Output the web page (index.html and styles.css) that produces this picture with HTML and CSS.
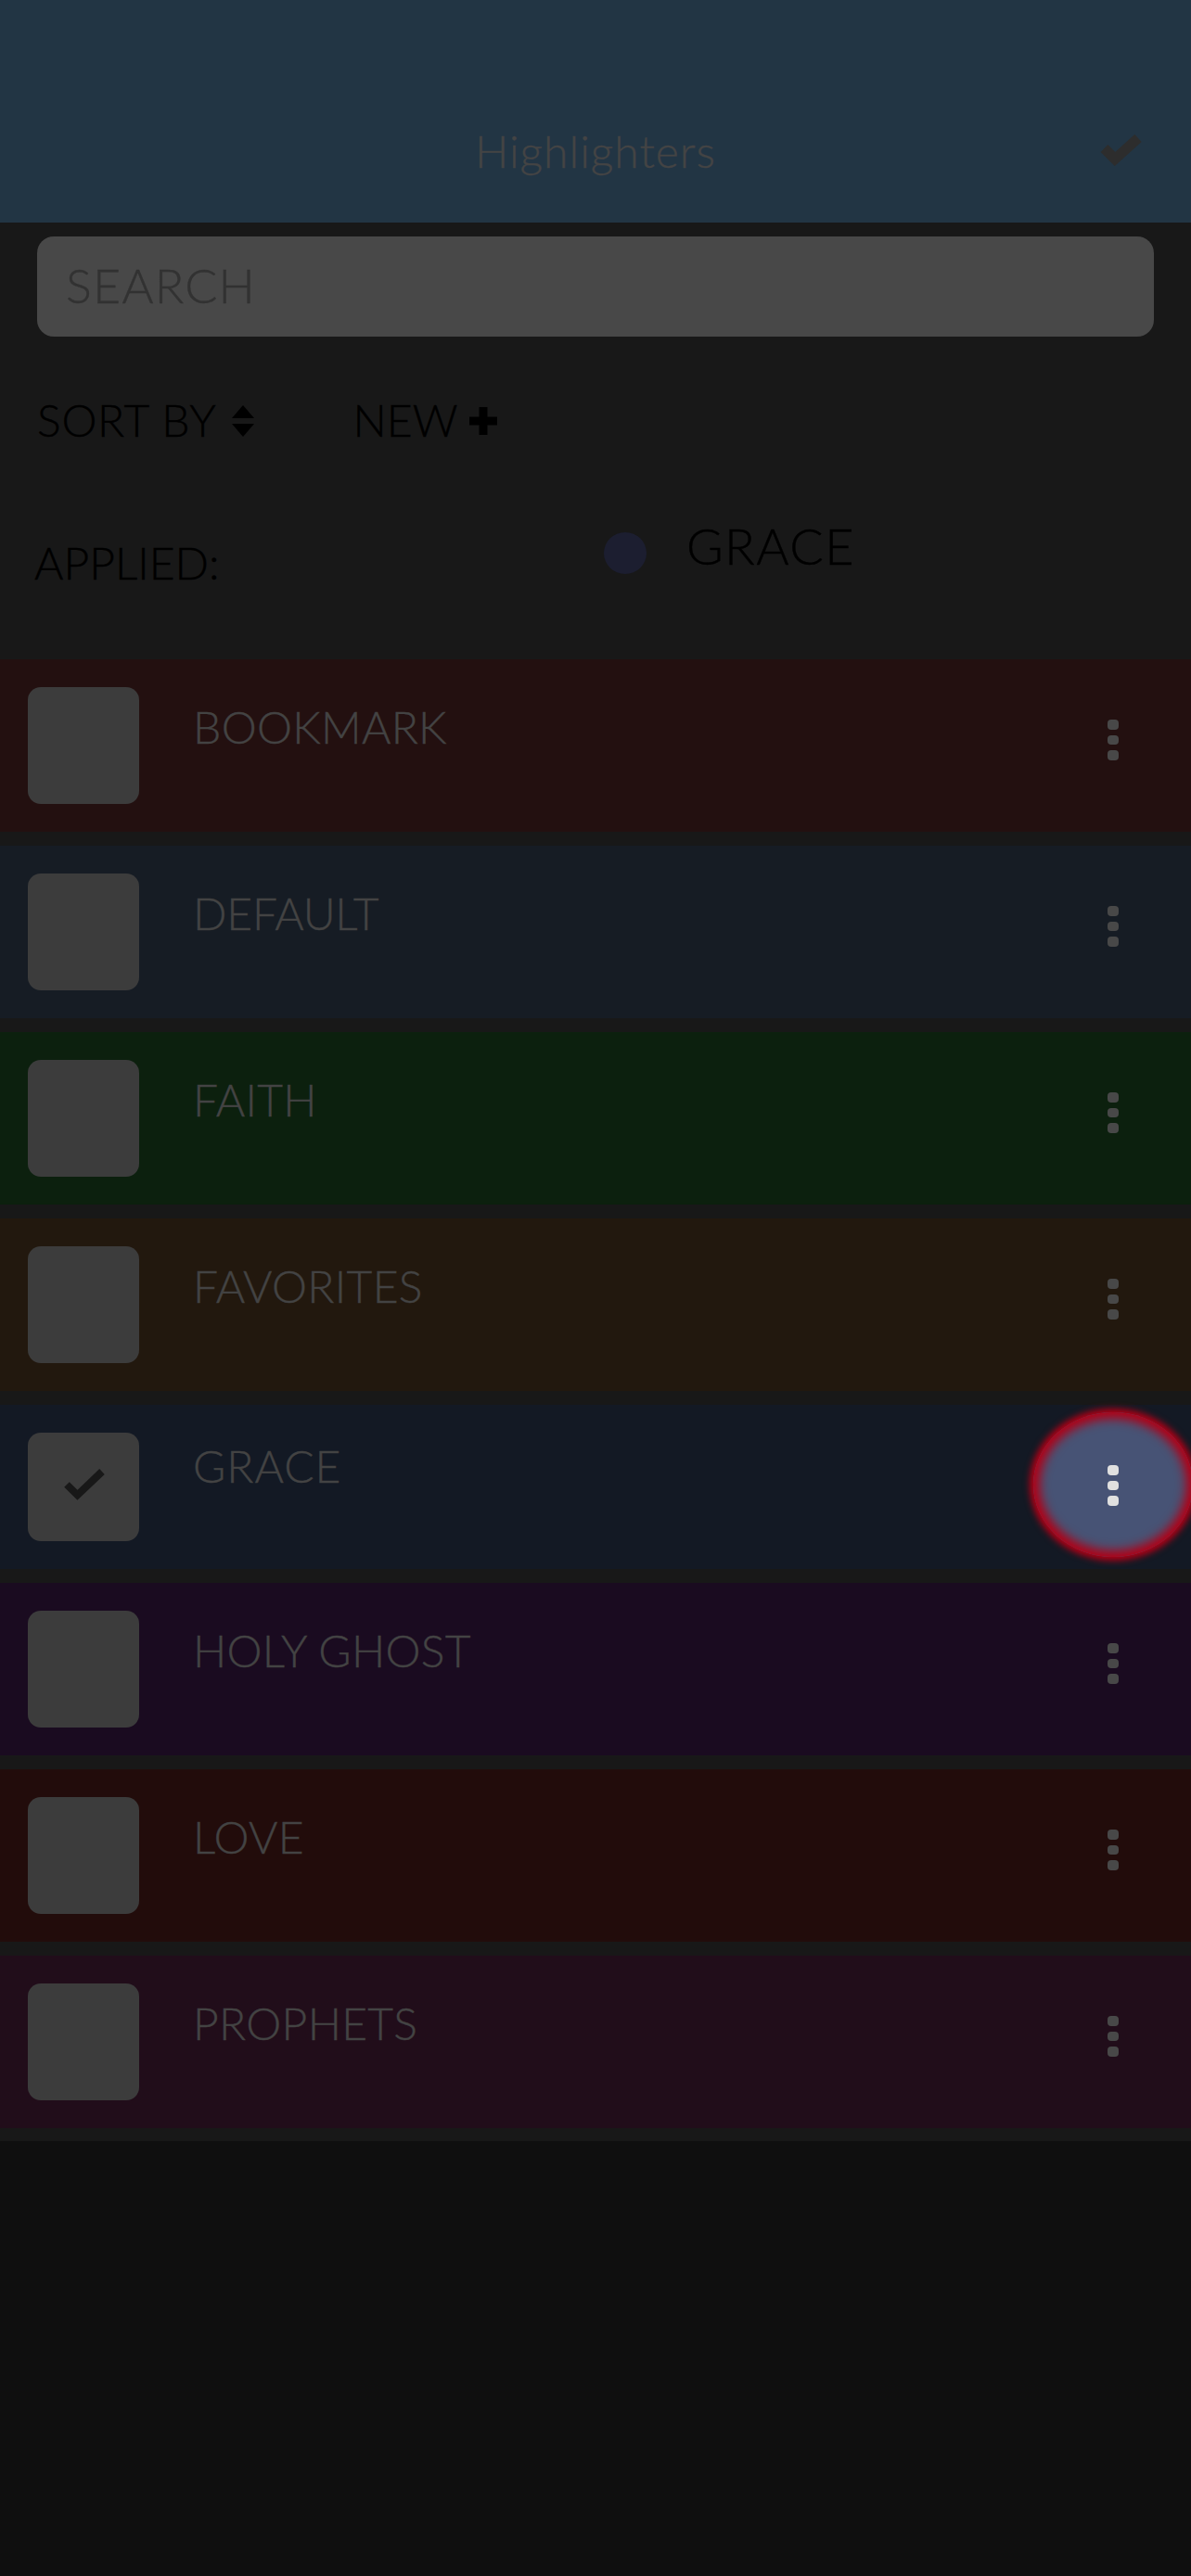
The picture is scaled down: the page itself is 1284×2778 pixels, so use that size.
FILE: index.html
```html
<!DOCTYPE html>
<html lang="en">
<head>
<meta charset="utf-8">
<title>Highlighters</title>
<link rel="stylesheet" href="styles.css">
</head>
<body>
<div class="page">
  <header class="header">
    <span></span>
    <h1 class="title">Highlighters</h1>
    <svg class="done" viewBox="0 0 46 34" aria-hidden="true"><polyline points="4.5,15 16,26.5 41,4" /></svg>
  </header>
  <div class="search">SEARCH</div>
  <div class="tools">
    <span class="tool sort">SORT BY</span>
    <svg class="sort-icon" viewBox="0 0 24 34" aria-hidden="true"><polygon points="12,0 24,14 0,14" /><polygon points="0,20 24,20 12,34" /></svg>
    <span class="tool new">NEW</span>
    <svg class="plus-icon" viewBox="0 0 30 30" aria-hidden="true"><rect x="10.5" y="0" width="9" height="30" /><rect x="0" y="10.5" width="30" height="9" /></svg>
  </div>
  <div class="applied">
    <span class="applied-label">APPLIED:</span>
    <span class="applied-dot"></span>
    <span class="applied-name">GRACE</span>
  </div>
  <ul class="list">
    <li class="row bookmark">
      <span class="box"></span><span class="name">BOOKMARK</span>
      <span class="more"><i></i><i></i><i></i></span>
    </li>
    <li class="row default">
      <span class="box"></span><span class="name tight">DEFAULT</span>
      <span class="more"><i></i><i></i><i></i></span>
    </li>
    <li class="row faith">
      <span class="box"></span><span class="name">FAITH</span>
      <span class="more"><i></i><i></i><i></i></span>
    </li>
    <li class="row favorites">
      <span class="box"></span><span class="name">FAVORITES</span>
      <span class="more"><i></i><i></i><i></i></span>
    </li>
    <li class="row grace">
      <span class="box"><svg class="tick" viewBox="0 0 48 36" aria-hidden="true"><polyline points="6,17 17.5,28.3 44,3" /></svg></span><span class="name">GRACE</span>
      <span class="more lit"><b class="halo"></b><i></i><i></i><i></i></span>
    </li>
    <li class="row holy">
      <span class="box"></span><span class="name">HOLY GHOST</span>
      <span class="more"><i></i><i></i><i></i></span>
    </li>
    <li class="row love">
      <span class="box"></span><span class="name">LOVE</span>
      <span class="more"><i></i><i></i><i></i></span>
    </li>
    <li class="row prophets">
      <span class="box"></span><span class="name">PROPHETS</span>
      <span class="more"><i></i><i></i><i></i></span>
    </li>
  </ul>
</div>
</body>
</html>
```

FILE: styles.css
```css
* { box-sizing: border-box; }

html, body {
  margin: 0;
  padding: 0;
  background: #0f0f0f;
  overflow: hidden;
}

body {
  font-family: "Lato", "Liberation Sans", sans-serif;
  font-weight: 300;
  -webkit-text-stroke: 0.4px currentColor;
}

.page {
  width: 1284px;
  height: 2309px;
  background: #181818;
  overflow: hidden;
}

.header {
  height: 240px;
  background: #223544;
  display: grid;
  grid-template-columns: 1fr auto 1fr;
  padding-top: 139px;
  align-items: start;
}

.title {
  margin: 0;
  font-size: 48px;
  line-height: 48px;
  font-weight: 300;
  letter-spacing: 1px;
  color: #444444;
}

.done {
  justify-self: end;
  width: 46px;
  height: 34px;
  margin: 6px 52px 0 0;
  fill: none;
  stroke: #2d2d2d;
  stroke-width: 11;
}

.search {
  margin: 15px 40px 0;
  height: 108px;
  padding: 26px 0 0 31px;
  background: #484848;
  border-radius: 18px;
  font-size: 52px;
  line-height: 52px;
  letter-spacing: 1.2px;
  color: #323232;
}

.tools {
  display: flex;
  align-items: flex-start;
  margin-top: 66px;
  padding-left: 40px;
  height: 48px;
  color: #000000;
}

.tool {
  font-size: 48px;
  line-height: 48px;
}

.sort { letter-spacing: 0.7px; }

.sort-icon {
  width: 24px;
  height: 34px;
  margin: 8px 0 0 16px;
  fill: #000000;
}

.new { margin-left: 107px; }

.plus-icon {
  width: 30px;
  height: 30px;
  margin: 10px 0 0 13px;
  fill: #000000;
}

.applied {
  display: flex;
  align-items: flex-start;
  margin-top: 85px;
  height: 149px;
  padding-left: 37px;
  color: #000000;
}

.applied-label {
  width: 614px;
  margin-top: 21px;
  font-size: 48px;
  line-height: 48px;
}

.applied-dot {
  width: 46px;
  height: 45px;
  margin-top: 12px;
  border-radius: 50%;
  background: #1c1e30;
}

.applied-name {
  margin: 1px 0 0 43px;
  font-size: 54px;
  line-height: 52px;
  letter-spacing: 1.4px;
}

.list {
  list-style: none;
  margin: 0;
  padding: 0;
  display: flex;
  flex-direction: column;
  gap: 15px;
}

.row {
  display: flex;
  align-items: flex-start;
  height: 186px;
  padding: 30px 78px 0 30px;
}

.bookmark { background: #231010; }
.default { background: #161c24; }
.faith { background: #0c200e; }
.favorites { background: #22180e; }
.grace { background: #131924; height: 177px; }
.holy { background: #1a0b20; }
.love { background: #220c0b; }
.prophets { background: #210d1a; }

.box {
  display: flex;
  align-items: center;
  justify-content: center;
  width: 120px;
  height: 126px;
  border-radius: 14px;
  background: #3c3c3c;
}

.grace .box { height: 117px; }

.tick {
  width: 48px;
  height: 36px;
  margin-top: -3px;
  fill: none;
  stroke: #181818;
  stroke-width: 8;
}

.name {
  margin: 19px 0 0 58px;
  font-size: 48px;
  line-height: 48px;
  letter-spacing: 0.3px;
  color: #434343;
}

.name.tight { letter-spacing: -0.2px; }

.grace .name { margin-top: 12px; letter-spacing: 1px; }

.more {
  position: relative;
  display: flex;
  flex-direction: column;
  gap: 6px;
  margin: 35px 0 0 auto;
}

.more i {
  position: relative;
  display: block;
  width: 12px;
  height: 10.5px;
  border-radius: 4px;
  background: #484848;
}

.lit i { background: #e0e0e0; }

.halo {
  position: absolute;
  left: 50%;
  top: calc(50% - 1px);
  width: 172px;
  height: 156px;
  transform: translate(-50%, -50%);
  border-radius: 50%;
  background: #475375;
  box-shadow: 0 0 7px 4px #b00016, inset 0 0 11px 7px #b00016;
}
```
